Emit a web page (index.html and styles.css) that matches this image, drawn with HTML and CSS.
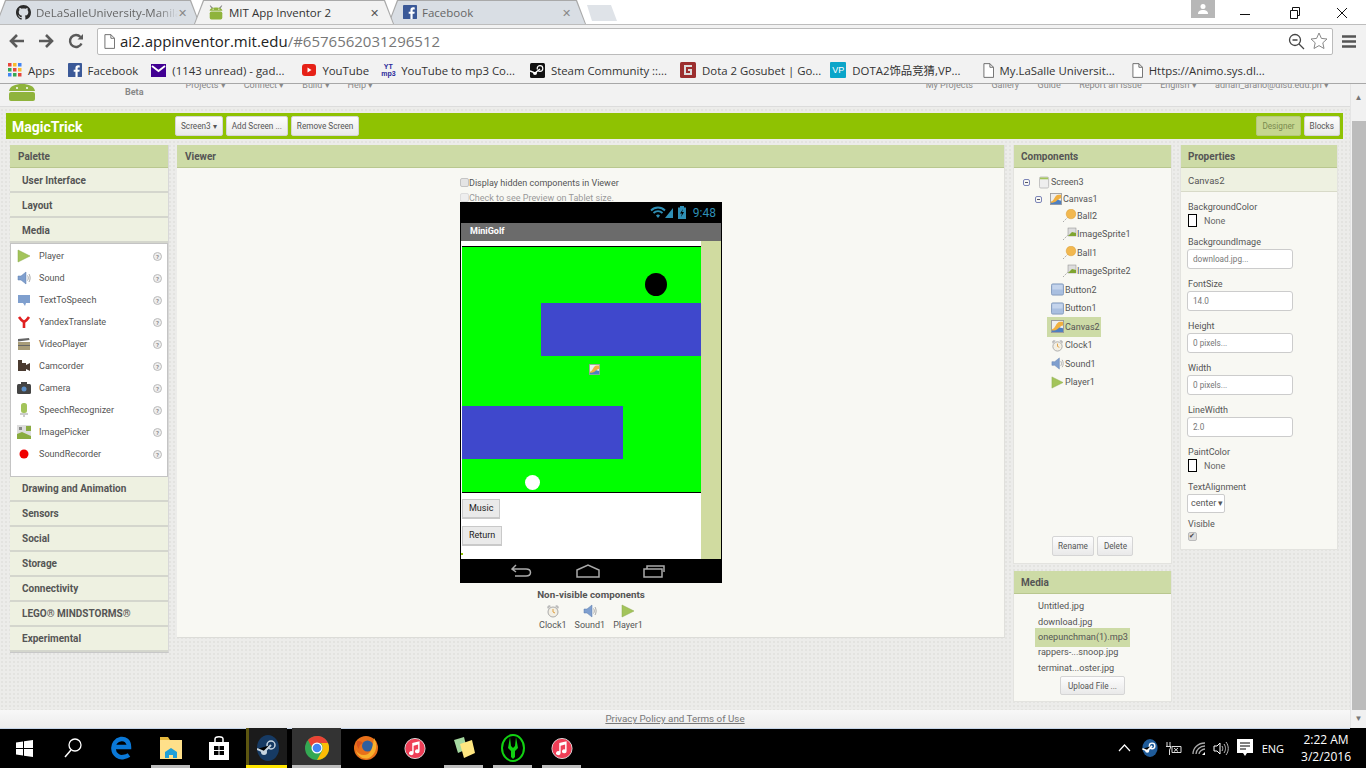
FILE: index.html
```html
<!DOCTYPE html>
<html lang="en">
<head>
  <meta charset="UTF-8">
  <meta name="viewport" content="width=device-width, initial-scale=1.0">
  <title>MIT App Inventor 2</title>
  <link rel="stylesheet" href="styles.css">
</head>
<body>
  <!-- shared icons -->
  <svg class="defs" width="0" height="0">
    <defs>
      <symbol id="i-github" viewBox="0 0 16 16"><path fill="#2b2b2b" d="M8 0C3.58 0 0 3.58 0 8c0 3.54 2.29 6.53 5.47 7.59.4.07.55-.17.55-.38 0-.19-.01-.82-.01-1.49-2.01.37-2.53-.49-2.69-.94-.09-.23-.48-.94-.82-1.13-.28-.15-.68-.52-.01-.53.63-.01 1.08.58 1.23.82.72 1.21 1.87.87 2.33.66.07-.52.28-.87.51-1.07-1.78-.2-3.64-.89-3.64-3.95 0-.87.31-1.59.82-2.15-.08-.2-.36-1.02.08-2.12 0 0 .67-.21 2.2.82.64-.18 1.32-.27 2-.27.68 0 1.36.09 2 .27 1.53-1.04 2.2-.82 2.2-.82.44 1.1.16 1.92.08 2.12.51.56.82 1.27.82 2.15 0 3.07-1.87 3.75-3.65 3.95.29.25.54.73.54 1.48 0 1.07-.01 1.93-.01 2.2 0 .21.15.46.55.38A8.013 8.013 0 0016 8c0-4.42-3.58-8-8-8z"/></symbol>
      <symbol id="i-fb" viewBox="0 0 16 16"><rect width="16" height="16" rx="1" fill="#3b5998"/><path fill="#fff" d="M11 16V10h2l.4-2.4H11V6.2c0-.8.3-1.2 1.2-1.2h1.2V2.8C13 2.7 12.300 2.600 11.500 2.600 9.700 2.600 8.500 3.700 8.500 5.800v1.800h-2V10h2v6z"/></symbol>
      <symbol id="i-droid" viewBox="0 0 28 28"><path fill="#8c8c8c" d="M4 2l5 5h10l5-5 1 1-4 6H7L3 3z"/><path fill="#8fb33c" d="M3 11C4 7 9 6 14 6s10 1 11 5v1H3z"/><rect x="3" y="13" width="22" height="14" rx="3" fill="#8fb33c"/><circle cx="9" cy="9" r="1" fill="#fff"/><circle cx="19" cy="9" r="1" fill="#fff"/></symbol>
      <symbol id="i-doc" viewBox="0 0 12 16"><path fill="#fff" stroke="#666" d="M1 .5h6.500l4 4v11H1zM7.500.5v4h4"/></symbol>
      <symbol id="i-player" viewBox="0 0 14 14"><path fill="#a3c45a" stroke="#8aa94a" stroke-width=".5" d="M1 1l12 6-12 6z"/></symbol>
      <symbol id="i-sound" viewBox="0 0 14 14"><path fill="#7f9fce" stroke="#5c7cae" stroke-width=".5" d="M1 5h3l5-4v12L4 9H1z"/><path fill="none" stroke="#aaa" d="M10.500 4.500c1 1.500 1 3.500 0 5M12 3c1.500 2.500 1.500 5.500 0 8"/></symbol>
      <symbol id="i-clock" viewBox="0 0 14 14"><circle cx="7" cy="8" r="5" fill="#f3efe3" stroke="#aaa"/><path fill="none" stroke="#e0a040" d="M7 5v3l2 1"/><path fill="#bbb" d="M1 3l2-2 2 1-3 3zM13 3l-2-2-2 1 3 3z"/></symbol>
      <symbol id="i-canvas" viewBox="0 0 14 14"><rect x=".5" y=".5" width="13" height="13" fill="#eee" stroke="#999"/><path fill="#f0b040" d="M1 10c4 0 4-8 9-8h3v4c-4 0-4 6-9 6H1z"/><path fill="#4f7fc0" d="M1 11c4 1 6-1 8-3l4 1v4H1z"/></symbol>
      <symbol id="i-button" viewBox="0 0 14 14"><rect x=".5" y="1" width="13" height="12" rx="1.500" fill="#a9bfe0" stroke="#8198bb"/><rect x="1.500" y="2" width="11" height="5" fill="#c4d4ec"/></symbol>
      <symbol id="i-ball" viewBox="0 0 14 14"><path fill="none" stroke="#aaa" stroke-dasharray="1.500 1" d="M0 13l5-5"/><circle cx="8" cy="5" r="4.800" fill="#f2b84f" stroke="#d99a30" stroke-width=".5"/></symbol>
      <symbol id="i-sprite" viewBox="0 0 14 14"><path fill="none" stroke="#aaa" stroke-dasharray="1.500 1" d="M0 13l5-5"/><rect x="5" y="1" width="8" height="8" fill="#ddd" stroke="#888" stroke-width=".5"/><path fill="#7fa52f" d="M5 9l4-4 4 1v3z"/></symbol>
      <symbol id="i-itunes" viewBox="0 0 24 24"><circle cx="12" cy="12" r="11" fill="#ef3e56" stroke="#ddd"/><path fill="#fff" d="M9 6l8-2v11a2.500 2.200 0 1 1-1.600-2V7.500L10.500 9v8a2.500 2.200 0 1 1-1.500-2z"/></symbol>
    </defs>
  </svg>

  <!-- browser chrome -->
  <div class="tabstrip">
    <div class="tab tab-first">
      <svg class="tab-ico" width="15" height="15"><use href="#i-github"/></svg>
      <span class="tab-title fade">DeLaSalleUniversity-Manila</span>
      <span class="tab-x">✕</span>
    </div>
    <div class="tab tab-active">
      <svg class="tab-ico" width="16" height="16"><use href="#i-droid"/></svg>
      <span class="tab-title">MIT App Inventor 2</span>
      <span class="tab-x">✕</span>
    </div>
    <div class="tab tab-last">
      <svg class="tab-ico" width="14" height="14"><use href="#i-fb"/></svg>
      <span class="tab-title">Facebook</span>
      <span class="tab-x">✕</span>
    </div>
    <div class="newtab"></div>
    <div class="win-btns">
      <div class="win-user">
        <svg width="12" height="12" viewBox="0 0 12 12"><circle cx="6" cy="3.500" r="2.500" fill="#fff"/><path fill="#fff" d="M1 11c0-3 2-4 5-4s5 1 5 4z"/></svg>
      </div>
      <svg class="win-min" width="12" height="12" viewBox="0 0 12 12"><path stroke="#111" d="M1 8.500h10"/></svg>
      <svg class="win-max" width="12" height="12" viewBox="0 0 12 12"><path fill="none" stroke="#111" d="M1.500 3.500h7v8h-7zM3.500 3.500v-3h7v8h-2"/></svg>
      <svg class="win-close" width="12" height="12" viewBox="0 0 12 12"><path stroke="#111" d="M1 1l10 10M11 1L1 11"/></svg>
    </div>
  </div>

  <div class="toolbar">
    <svg class="nav-ico" width="18" height="16" viewBox="0 0 18 16"><path fill="none" stroke="#5a5a5a" stroke-width="2.600" d="M16 8H3M9 2L3 8l6 6"/></svg>
    <svg class="nav-ico" width="18" height="16" viewBox="0 0 18 16"><path fill="none" stroke="#5a5a5a" stroke-width="2.600" d="M2 8h13M9 2l6 6-6 6"/></svg>
    <svg class="nav-ico" width="16" height="16" viewBox="0 0 16 16"><path fill="none" stroke="#5a5a5a" stroke-width="2.400" d="M13.500 10.500A6 6 0 1 1 12.500 4"/><path fill="#5a5a5a" d="M9.500 6.500H15V1z"/></svg>
    <div class="urlbar">
      <svg width="11" height="15"><use href="#i-doc"/></svg>
      <span class="url">ai2.appinventor.mit.edu<span class="url-rest">/#6576562031296512</span></span>
      <svg class="url-zoom" width="17" height="17" viewBox="0 0 17 17"><circle cx="7" cy="7" r="5.500" fill="none" stroke="#444" stroke-width="1.300"/><path stroke="#444" stroke-width="1.300" d="M4.500 7h5M11 11l5 5"/></svg>
      <svg class="url-star" width="18" height="18" viewBox="0 0 18 18"><path fill="none" stroke="#888" d="M9 1l2.400 5.400 5.600.6-4.200 3.800 1.200 5.700L9 13.600 4 16.500l1.200-5.700L1 7l5.600-.6z"/></svg>
    </div>
    <svg class="menu-ico" width="14" height="13" viewBox="0 0 14 13"><path stroke="#555" stroke-width="2.600" d="M0 1.500h14M0 6.500h14M0 11.500h14"/></svg>
  </div>

  <div class="bookmarks">
    <div class="bm bm-apps">
      <svg width="14" height="14" viewBox="0 0 14 14"><path fill="#e8453c" d="M0 0h3.500v3.500H0z"/><path fill="#f9bb2d" d="M5 0h3.500v3.500H5z"/><path fill="#4285f4" d="M10 0h3.500v3.500H10z"/><path fill="#34a853" d="M0 5h3.500v3.500H0z"/><path fill="#e8453c" d="M5 5h3.500v3.500H5z"/><path fill="#f9bb2d" d="M10 5h3.500v3.500H10z"/><path fill="#4285f4" d="M0 10h3.500v3.500H0z"/><path fill="#34a853" d="M5 10h3.500v3.500H5z"/><path fill="#e8453c" d="M10 10h3.500v3.500H10z"/></svg>
      <span>Apps</span>
    </div>
    <div class="bm"><svg width="14" height="14"><use href="#i-fb"/></svg><span>Facebook</span></div>
    <div class="bm bm-mail"><svg width="15" height="13" viewBox="0 0 15 13"><rect width="15" height="13" fill="#410093"/><path fill="none" stroke="#fff" stroke-width="1.800" d="M1 2l6.500 5L14 2"/></svg><span>(1143 unread) - gad...</span></div>
    <div class="bm bm-yt"><svg width="14" height="12" viewBox="0 0 14 12"><rect width="14" height="12" rx="3" fill="#e62117"/><path fill="#fff" d="M5.500 3.500l4 2.500-4 2.500z"/></svg><span>YouTube</span></div>
    <div class="bm bm-mp3"><span class="ytmp3">YT<br>mp3</span><span>YouTube to mp3 Co...</span></div>
    <div class="bm"><svg width="15" height="15" viewBox="0 0 15 15"><rect width="15" height="15" rx="1.500" fill="#111"/><circle cx="10" cy="5.500" r="2.800" fill="none" stroke="#fff" stroke-width="1.200"/><circle cx="5" cy="10" r="2" fill="#fff"/><path stroke="#fff" stroke-width="1.500" d="M0 8l5 2 5-4"/></svg><span>Steam Community ::...</span></div>
    <div class="bm bm-dota"><svg width="16" height="16" viewBox="0 0 16 16"><rect width="16" height="16" rx="1.500" fill="#9c2f2f"/><path fill="none" stroke="#ddd" stroke-width="2" d="M12 4H5v8h6V8H8"/></svg><span>Dota 2 Gosubet | Go...</span></div>
    <div class="bm"><span class="vp">VP</span><span>DOTA2饰品竞猜,VP...</span></div>
    <div class="bm bm-far"><svg width="11" height="15"><use href="#i-doc"/></svg><span>My.LaSalle Universit...</span></div>
    <div class="bm bm-doc"><svg width="11" height="15"><use href="#i-doc"/></svg><span>Https://Animo.sys.dl...</span></div>
  </div>

  <div class="viewport">
    <div class="page">
      <!-- top menu, scrolled up so only the bottom of it shows -->
      <header class="topmenu">
        <svg class="logo" width="28" height="17" viewBox="0 0 28 17"><path fill="#8fb33c" d="M1 7C2 2 7 0 14 0s12 2 13 7z"/><circle cx="9" cy="4" r="1" fill="#fff"/><circle cx="19" cy="4" r="1" fill="#fff"/><rect x="1" y="8" width="26" height="9" rx="2" fill="#8fb33c"/></svg>
        <span class="beta">Beta</span>
        <nav class="menu menu-left">
          <span>Projects ▾</span><span>Connect ▾</span><span>Build ▾</span><span>Help ▾</span>
        </nav>
        <nav class="menu menu-right">
          <span>My Projects</span><span>Gallery</span><span>Guide</span><span>Report an Issue</span><span>English ▾</span><span>adrian_afano@dlsu.edu.ph ▾</span>
        </nav>
      </header>

      <div class="projectbar">
        <strong class="project-name">MagicTrick</strong>
        <button class="btn">Screen3 ▾</button>
        <button class="btn">Add Screen ...</button>
        <button class="btn">Remove Screen</button>
        <div class="view-switch">
          <button class="btn btn-on">Designer</button>
          <button class="btn">Blocks</button>
        </div>
      </div>

      <main class="workspace">
        <!-- palette -->
        <section class="palette">
          <h4 class="box-head">Palette</h4>
          <div class="drawer">User Interface</div>
          <div class="drawer">Layout</div>
          <div class="drawer">Media</div>
          <ul class="palette-list">
            <li><svg width="14" height="14"><use href="#i-player"/></svg><span>Player</span><i>?</i></li>
            <li><svg width="14" height="14"><use href="#i-sound"/></svg><span>Sound</span><i>?</i></li>
            <li><svg width="14" height="14" viewBox="0 0 14 14"><path fill="#7f9fce" d="M1 2h12v8H9l-1 3-2-3H1z"/></svg><span>TextToSpeech</span><i>?</i></li>
            <li><svg width="14" height="14" viewBox="0 0 14 14"><path fill="none" stroke="#e02020" stroke-width="2.600" d="M2 2c2 3 3 4 5 5 2-1 3-2 5-5M7 7v6"/></svg><span>YandexTranslate</span><i>?</i></li>
            <li><svg width="14" height="14" viewBox="0 0 14 14"><rect x="1" y="5" width="12" height="8" fill="#a89c78"/><path fill="#666" d="M1 2l11-1 .5 2L1 4.500zM1 8h12v1H1z"/></svg><span>VideoPlayer</span><i>?</i></li>
            <li><svg width="14" height="14" viewBox="0 0 14 14"><path fill="#4a3a30" d="M1 4h8v8H1zM1 1h4v3H1zM9 6l4-2v8L9 10z"/></svg><span>Camcorder</span><i>?</i></li>
            <li><svg width="14" height="14" viewBox="0 0 14 14"><rect x="0" y="3" width="14" height="10" rx="1.500" fill="#444"/><path fill="#444" d="M4 1h6v2H4z"/><circle cx="7" cy="8" r="2.500" fill="#5b8fc9"/></svg><span>Camera</span><i>?</i></li>
            <li><svg width="14" height="14" viewBox="0 0 14 14"><rect x="4" y="0" width="6" height="10" rx="2.500" fill="#a3c45a"/><path fill="#ccc" d="M3 10h8v2H8v2H6v-2H3z"/></svg><span>SpeechRecognizer</span><i>?</i></li>
            <li><svg width="14" height="14" viewBox="0 0 14 14"><rect width="14" height="14" fill="#ddd"/><path fill="#8aac3f" d="M0 9l5-2 9 4v3H0zM9 1h5v5H9z"/><path fill="#888" d="M2 2h3v3H2z"/></svg><span>ImagePicker</span><i>?</i></li>
            <li><svg width="14" height="14" viewBox="0 0 14 14"><circle cx="7" cy="7" r="4.500" fill="#f00000"/></svg><span>SoundRecorder</span><i>?</i></li>
          </ul>
          <div class="drawer">Drawing and Animation</div>
          <div class="drawer">Sensors</div>
          <div class="drawer">Social</div>
          <div class="drawer">Storage</div>
          <div class="drawer">Connectivity</div>
          <div class="drawer">LEGO® MINDSTORMS®</div>
          <div class="drawer">Experimental</div>
        </section>

        <!-- viewer -->
        <section class="viewer">
          <h4 class="box-head">Viewer</h4>
          <div class="viewer-body">
            <div class="checks">
              <label class="check"><span class="checkbox"></span>Display hidden components in Viewer</label>
              <label class="check check-off"><span class="checkbox"></span>Check to see Preview on Tablet size.</label>
            </div>
            <div class="phone">
              <div class="statusbar">
                <svg width="24" height="13" viewBox="0 0 24 13"><path fill="none" stroke="#2f8fb5" stroke-width="1.800" d="M1 4.500C5 .5 11 .5 15 4.500M3.500 7C6 4.500 10 4.500 12.500 7"/><path fill="#2f8fb5" d="M6 9.500c1-1.200 3-1.200 4 0L8 12zM15 12l8-10v10z"/></svg>
                <svg width="8" height="13" viewBox="0 0 8 13"><path fill="#2f8fb5" d="M2 0h4v1.500h2V13H0V1.500h2z"/><path fill="#000" d="M5 3L2 7.500h2L3 11l3-5H4z"/></svg>
                <span class="clock">9:48</span>
              </div>
              <div class="titlebar">MiniGolf</div>
              <div class="screen">
                <div class="screen-main">
                  <div class="gamecanvas">
                    <div class="ball ball-black"></div>
                    <div class="wall wall-top"></div>
                    <svg class="sprite" width="11" height="11"><use href="#i-canvas"/></svg>
                    <div class="wall wall-bottom"></div>
                    <div class="ball ball-white"></div>
                  </div>
                  <button class="phone-btn">Music</button>
                  <button class="phone-btn phone-btn-2">Return</button>
                  <div class="phone-dot"></div>
                </div>
                <div class="screen-side"></div>
              </div>
              <div class="navbar">
                <svg width="22" height="14" viewBox="0 0 22 14"><path fill="none" stroke="#aaa" stroke-width="1.500" d="M5 1L1 5l4 3M1 5h14c6 0 6 7 0 7H4"/></svg>
                <svg width="24" height="14" viewBox="0 0 24 14"><path fill="none" stroke="#aaa" stroke-width="1.500" d="M1 6l11-5 11 5v7H1z"/></svg>
                <svg width="22" height="14" viewBox="0 0 22 14"><path fill="none" stroke="#aaa" stroke-width="1.500" d="M1 5h18v8H1zM4 5V2h17v6"/></svg>
              </div>
            </div>
            <div class="nonvisible-title">Non-visible components</div>
            <div class="nonvisible">
              <div><svg width="14" height="14"><use href="#i-clock"/></svg><span>Clock1</span></div>
              <div><svg width="14" height="14"><use href="#i-sound"/></svg><span>Sound1</span></div>
              <div><svg width="14" height="14"><use href="#i-player"/></svg><span>Player1</span></div>
            </div>
          </div>
        </section>

        <!-- components + media -->
        <div class="col-components">
          <section class="components">
            <h4 class="box-head">Components</h4>
            <div class="components-body">
              <ul class="tree">
                <li class="lvl-0"><span class="toggle"></span><svg width="11" height="13" viewBox="0 0 12 13"><rect x=".5" y=".5" width="10" height="12" rx="1.500" fill="#eee" stroke="#bbb"/><path fill="#a3c45a" d="M1 1h9v2H1z"/></svg><span>Screen3</span></li>
                <li class="lvl-1"><span class="toggle"></span><svg width="12" height="12"><use href="#i-canvas"/></svg><span>Canvas1</span></li>
                <li class="lvl-2 first-leaf"><svg width="14" height="14"><use href="#i-ball"/></svg><span>Ball2</span></li>
                <li class="lvl-2"><svg width="14" height="14"><use href="#i-sprite"/></svg><span>ImageSprite1</span></li>
                <li class="lvl-2"><svg width="14" height="14"><use href="#i-ball"/></svg><span>Ball1</span></li>
                <li class="lvl-2"><svg width="14" height="14"><use href="#i-sprite"/></svg><span>ImageSprite2</span></li>
                <li class="lvl-3"><svg width="13" height="13"><use href="#i-button"/></svg><span>Button2</span></li>
                <li class="lvl-3"><svg width="13" height="13"><use href="#i-button"/></svg><span>Button1</span></li>
                <li class="lvl-3 selected"><svg width="13" height="13"><use href="#i-canvas"/></svg><span>Canvas2</span></li>
                <li class="lvl-3"><svg width="13" height="13"><use href="#i-clock"/></svg><span>Clock1</span></li>
                <li class="lvl-3"><svg width="13" height="13"><use href="#i-sound"/></svg><span>Sound1</span></li>
                <li class="lvl-3"><svg width="13" height="13"><use href="#i-player"/></svg><span>Player1</span></li>
              </ul>
              <div class="comp-actions">
                <button class="btn">Rename</button>
                <button class="btn">Delete</button>
              </div>
            </div>
          </section>

          <section class="media">
            <h4 class="box-head">Media</h4>
            <ul class="media-list">
              <li>Untitled.jpg</li>
              <li>download.jpg</li>
              <li class="selected">onepunchman(1).mp3</li>
              <li>rappers-...snoop.jpg</li>
              <li>terminat...oster.jpg</li>
            </ul>
            <button class="btn btn-upload">Upload File ...</button>
          </section>
        </div>

        <!-- properties -->
        <section class="properties">
          <h4 class="box-head">Properties</h4>
          <div class="prop-subject">Canvas2</div>
          <div class="prop-list">
            <div class="prop"><label>BackgroundColor</label><div class="swatch-row"><span class="swatch"></span>None</div></div>
            <div class="prop"><label>BackgroundImage</label><div class="input">download.jpg...</div></div>
            <div class="prop"><label>FontSize</label><div class="input">14.0</div></div>
            <div class="prop"><label>Height</label><div class="input">0 pixels...</div></div>
            <div class="prop"><label>Width</label><div class="input">0 pixels...</div></div>
            <div class="prop"><label>LineWidth</label><div class="input">2.0</div></div>
            <div class="prop"><label>PaintColor</label><div class="swatch-row"><span class="swatch"></span>None</div></div>
            <div class="prop prop-select"><label>TextAlignment</label><div class="select">center ▾</div></div>
            <div class="prop prop-visible"><label>Visible</label><span class="tick">✔</span></div>
          </div>
        </section>
      </main>

      <footer class="footer"><a href="#">Privacy Policy and Terms of Use</a></footer>
    </div>
    <div class="scrollbar">
      <div class="sb-arrow">▲</div>
      <div class="sb-thumb"></div>
      <div class="sb-arrow">▼</div>
    </div>
  </div>

  <!-- windows taskbar -->
  <div class="taskbar">
    <div class="task task-start"><svg width="17" height="17" viewBox="0 0 17 17"><path fill="#fff" d="M0 2.500l7-1v6.500H0zM8 1.300L17 0v8H8zM0 9h7v6.500l-7-1zM8 9h9v8l-9-1.300z"/></svg></div>
    <div class="task"><svg width="18" height="20" viewBox="0 0 18 20"><circle cx="11" cy="7" r="6" fill="none" stroke="#fff" stroke-width="1.300"/><path stroke="#fff" stroke-width="1.500" d="M7 12l-6 7"/></svg></div>
    <div class="task"><svg width="22" height="24" viewBox="0 0 22 24"><path fill="none" stroke="#0a78d7" stroke-width="4.500" d="M3 11h15C18 5 14 2.500 10 3 5 4 2 8 2.500 13c.5 6 6 9 10 8 2-.3 4-1 5.500-2"/></svg></div>
    <div class="task is-open"><svg width="22" height="22" viewBox="0 0 22 22"><path fill="#e6b93e" d="M0 0h8l2 3h-10z"/><path fill="#ffe08a" d="M0 3h22v19H0z"/><path fill="#1f9fd8" d="M5 21v-6l6-4 6 4v6h-4v-3H9v3z"/></svg></div>
    <div class="task task-store"><svg width="20" height="24" viewBox="0 0 20 24"><path fill="#fff" d="M0 6h20v18H0z"/><path fill="none" stroke="#fff" stroke-width="1.500" d="M6 6V3c0-3 8-3 8 0v3"/><path fill="#000" d="M5 10h4.500v4H5zM10.500 10H15v4h-4.500zM5 15h4.500v4H5zM10.500 15H15v4h-4.500z"/></svg></div>
    <div class="task task-steam"><svg width="22" height="26" viewBox="0 0 22 26"><ellipse cx="11" cy="13" rx="11" ry="13" fill="#163a63"/><circle cx="14" cy="10" r="4" fill="none" stroke="#c7d5e0" stroke-width="1.500"/><circle cx="7" cy="17" r="3" fill="#c7d5e0"/><path stroke="#c7d5e0" stroke-width="2" d="M0 14l7 3 7-7"/></svg></div>
    <div class="task task-chrome is-open"><svg width="24" height="28" viewBox="0 0 24 24"><circle cx="12" cy="12" r="12" fill="#34a853"/><path fill="#ea4335" d="M3 4a12 12 0 0 1 20 3H12c-3 0-5 2-5.500 4z"/><path fill="#fbbc05" d="M23 7a12 12 0 0 1-11 17l5-9c1-2 1-5-1-8z"/><circle cx="12" cy="12" r="5.500" fill="#fff"/><circle cx="12" cy="12" r="4.300" fill="#4285f4"/></svg></div>
    <div class="task"><svg width="24" height="28" viewBox="0 0 24 24"><circle cx="12" cy="12" r="12" fill="#e8701a"/><circle cx="13.500" cy="10" r="5.500" fill="#2f5f9e"/><path fill="#f8b02c" d="M20 2c4 6 3 16-5 20-6 2-12-2-13-8 2 5 8 6 12 4 4-3 5-9 6-16z"/><path fill="#d9531e" d="M3 5c2 0 4 0 6 2-3 1-4 3-4 6-2-2-3-5-2-8z"/></svg></div>
    <div class="task"><svg width="22" height="25" viewBox="0 0 24 24"><use href="#i-itunes"/></svg></div>
    <div class="task is-open"><svg width="24" height="24" viewBox="0 0 24 24"><path fill="#a5d8a0" d="M2 4l10-3 3 12-9 4z"/><path fill="#ffe680" d="M8 8l12-4 3 13-11 5z"/></svg></div>
    <div class="task is-open"><svg width="24" height="28" viewBox="0 0 24 28"><ellipse cx="12" cy="14" rx="11" ry="13" fill="none" stroke="#12d112" stroke-width="2"/><path fill="#12d112" d="M9 3l1 9 2 2 2-2 1-9 2 11-3 3v6l-2 2-2-2v-6l-3-3z"/></svg></div>
    <div class="task is-open"><svg width="22" height="25" viewBox="0 0 24 24"><use href="#i-itunes"/></svg></div>

    <div class="tray">
      <svg width="13" height="8" viewBox="0 0 13 8"><path fill="none" stroke="#fff" stroke-width="1.200" d="M1 7l5.500-6L12 7"/></svg>
      <svg class="tray-steam" width="16" height="18" viewBox="0 0 22 26"><ellipse cx="11" cy="13" rx="11" ry="13" fill="#1f5b99"/><circle cx="14" cy="10" r="4" fill="none" stroke="#fff" stroke-width="2"/><circle cx="7" cy="17" r="3" fill="#fff"/><path stroke="#fff" stroke-width="2.500" d="M0 14l7 3 7-7"/></svg>
      <svg class="tray-power" width="16" height="13" viewBox="0 0 16 13"><path fill="none" stroke="#ddd" d="M1 0v4M4 0v4M0 4.500h5L3.500 8v5M6 4.500h9v6H6z"/><path stroke="#ddd" d="M8 6l4 3.500M12 6L8 9.500"/></svg>
      <svg class="tray-wifi" width="16" height="15" viewBox="0 0 16 15"><path fill="none" stroke="#aaa" stroke-width="1.300" d="M1 13C1 7 6 2 13 2M4 13c0-4 4-8 9-8M7 13c0-2 3-5 6-5"/><path fill="#fff" d="M10 14l3-3v3z"/></svg>
      <svg class="tray-vol" width="16" height="15" viewBox="0 0 16 15"><path fill="none" stroke="#fff" d="M1 5h3l3-3v11l-3-3H1z"/><path fill="none" stroke="#bbb" d="M9 5c1 1.500 1 3.500 0 5M11 3c2 3 2 6 0 9M13 1c3 4 3 9 0 13"/></svg>
      <svg class="tray-note" width="16" height="18" viewBox="0 0 16 18"><path fill="#fff" d="M0 0h16v14H10l-2 3-2-3H0z"/><path stroke="#000" d="M3 4h10M3 7h10M3 10h6"/></svg>
      <span class="tray-lang">ENG</span>
      <div class="tray-clock"><span>2:22 AM</span><span>3/2/2016</span></div>
    </div>
  </div>
</body>
</html>
```

FILE: styles.css
```css
/* page base */
* {
  box-sizing: border-box;
}
html, body {
  margin: 0;
  height: 768px;
  overflow: hidden;
}
body {
  font-family: Roboto, "Liberation Sans", sans-serif;
  color: #555;
  background: #fff;
}
ul {
  list-style: none;
  margin: 0;
  padding: 0;
}
svg {
  flex: none;
  display: block;
}
.defs {
  position: absolute;
}

/* tab strip */
.tabstrip {
  height: 24px;
  display: flex;
  align-items: flex-end;
  background: #fff;
  font-family: "Open Sans", "Liberation Sans", sans-serif;
  font-size: 11.5px;
}
.tab {
  --fill: #d9dee4;
  height: 24px;
  width: 200px;
  display: flex;
  align-items: center;
  position: relative;
  clip-path: polygon(0 100%, 9px 0, calc(100% - 9px) 0, 100% 100%);
  background: #a9a9a9;
  color: #666;
}
.tab::before {
  content: "";
  position: absolute;
  inset: 1px 1px 0;
  z-index: -1;
  clip-path: polygon(0 100%, 9px 0, calc(100% - 9px) 0, 100% 100%);
  background: var(--fill);
}
.tab-first {
  width: 204px;
  margin-left: -4px;
  padding-left: 20px;
}
.tab-active {
  --fill: #f2f2f2;
  width: 200px;
  margin-left: -6px;
  padding-left: 14px;
  color: #333;
  z-index: 2;
}
.tab-last {
  width: 198px;
  margin-left: -6px;
  padding-left: 15px;
}
.tab-ico {
  margin-right: 5px;
}
.tab-title {
  flex: 1;
  min-width: 0;
  white-space: nowrap;
  overflow: hidden;
}
.fade {
  -webkit-mask-image: linear-gradient(90deg, #000 85%, transparent);
  mask-image: linear-gradient(90deg, #000 85%, transparent);
}
.tab-x {
  width: 24px;
  font-size: 11px;
  color: #888;
}
.tab-active .tab-x {
  color: #555;
}
.tab-first .tab-x {
  width: 22px;
}
.newtab {
  width: 30px;
  height: 16px;
  margin: 0 0 3px 1px;
  background: #dfe3e8;
  clip-path: polygon(0 0, 24px 0, 100% 100%, 5px 100%);
}
.win-btns {
  margin-left: auto;
  align-self: flex-start;
  display: flex;
  align-items: flex-start;
}
.win-user {
  width: 24px;
  height: 18px;
  background: #b7b7b7;
  display: flex;
  align-items: center;
  justify-content: center;
}
.win-min {
  margin: 6px 0 0 24px;
}
.win-max {
  margin: 7px 0 0 38px;
}
.win-close {
  margin: 7px 18px 0 35px;
}

/* address bar */
.toolbar {
  height: 33px;
  background: #f2f2f2;
  border-top: 1px solid #bdbdbd;
  display: flex;
  align-items: center;
  padding: 0 10px 0 8px;
}
.nav-ico {
  margin-right: 11px;
}
.toolbar .nav-ico:nth-child(3) {
  margin: 0 13px 0 2px;
}
.urlbar {
  flex: 1;
  height: 27px;
  background: #fff;
  border: 1px solid #bbb;
  border-radius: 2px;
  display: flex;
  align-items: center;
  padding: 0 4px 0 6px;
}
.url {
  margin-left: 5px;
  font-family: "Open Sans", "Liberation Sans", sans-serif;
  font-size: 15px;
  color: #222;
}
.url-rest {
  color: #777;
}
.url-zoom {
  margin-left: auto;
}
.url-star {
  margin-left: 5px;
}
.menu-ico {
  margin-left: 9px;
}

/* bookmarks bar */
.bookmarks {
  height: 27px;
  background: #f2f2f2;
  border-bottom: 1px solid #a8a8a8;
  display: flex;
  align-items: center;
  padding-left: 8px;
  font-family: "Open Sans", "Noto Sans CJK SC", sans-serif;
  font-size: 11.4px;
  color: #333;
  white-space: nowrap;
}
.bm {
  display: flex;
  align-items: center;
  gap: 6px;
  margin-right: 13px;
}
.bm-mail {
  margin-right: 18px;
}
.bm-yt {
  margin-right: 12px;
}
.bm-mp3 {
  margin-right: 15px;
}
.bm-dota {
  margin-right: 9px;
}
.bm-far {
  margin-left: 9px;
  margin-right: 17px;
}
.ytmp3 {
  width: 14px;
  font: bold 7px/7px "Liberation Sans", sans-serif;
  color: #2a2a9a;
  text-align: center;
}
.vp {
  width: 16px;
  height: 16px;
  background: #0aa5c9;
  color: #fff;
  font: 9px/16px "Liberation Sans", sans-serif;
  text-align: center;
  border-radius: 1px;
}

/* page area */
.viewport {
  height: 644px;
  display: flex;
}
.page {
  flex: 1;
  min-width: 0;
  display: flex;
  flex-direction: column;
  background-color: #ececea;
  background-image: radial-gradient(#e3e3e0 1px, transparent 1px);
  background-size: 4px 4px;
}
.scrollbar {
  width: 16px;
  background: #f1f1f1;
  border-left: 1px solid #e4e4e4;
  display: flex;
  flex-direction: column;
  align-items: center;
  font-size: 8px;
  color: #777;
}
.sb-arrow {
  height: 37px;
  line-height: 16px;
  padding-top: 6px;
}
.sb-thumb {
  flex: 1;
  width: 14px;
  background: #bcbcbc;
}
.sb-arrow:last-child {
  height: 18px;
  padding-top: 1px;
}

/* clipped top menu */
.topmenu {
  height: 23px;
  flex: none;
  background: #f2f2f2;
  border-bottom: 1px solid #dcdcdc;
  display: flex;
  align-items: flex-start;
  overflow: hidden;
  font-size: 9px;
  color: #888;
}
.logo {
  margin-left: 8px;
}
.beta {
  margin: 3px 0 0 89px;
  font-weight: bold;
  font-size: 9px;
}
.menu {
  display: flex;
  margin-top: -4px;
  white-space: nowrap;
}
.menu-left {
  margin-left: 42px;
  gap: 18px;
}
.menu-right {
  margin-left: auto;
  margin-right: 21px;
  gap: 18.500px;
}

/* green project bar */
.projectbar {
  flex: none;
  height: 26px;
  margin: 6px 7px 0 6px;
  background: #8fc202;
  display: flex;
  align-items: center;
  gap: 3px;
  padding: 0 3px 0 6px;
}
.project-name {
  width: 160px;
  padding-top: 1px;
  color: #fff;
  font-size: 14px;
}
.btn {
  height: 20px;
  padding: 0 5px;
  font: 8.2px Roboto, sans-serif;
  color: #555;
  background: linear-gradient(#fdfdfd, #e9e9e9);
  border: 1px solid #d5d5d5;
  border-radius: 2px;
  white-space: nowrap;
}
.view-switch {
  margin-left: auto;
  display: flex;
  gap: 3px;
}
.btn-on {
  background: #c5d68f;
  border-color: #b5c77e;
  color: #7a8a50;
}

/* main columns */
.workspace {
  flex: none;
  height: 565px;
  display: flex;
  align-items: flex-start;
  padding: 6px 0 0 10px;
}
.box-head {
  margin: 0;
  height: 23px;
  padding-left: 8px;
  line-height: 24px;
  background: #cddba6;
  border-bottom: 1px solid #b9c78f;
  font-size: 10px;
  font-weight: bold;
  color: #555;
}
.col-components .box-head, .properties .box-head {
  padding-left: 7px;
}
.palette {
  width: 159px;
  margin-right: 8px;
  border-right: 1px solid #d8d8d8;
  border-bottom: 1px solid #c8c8c8;
}
.drawer {
  height: 25px;
  padding-left: 12px;
  line-height: 25px;
  background: #eef1e1;
  border-bottom: 2px solid #d4d6cd;
  font-size: 10px;
  font-weight: bold;
  color: #555;
}
.palette-list ~ .drawer {
  line-height: 23px;
}
.palette-list {
  height: 234px;
  padding-top: 1px;
  background: #fff;
  border: 1px solid #c4c4c4;
  margin: 0;
}
.palette-list li {
  height: 22px;
  display: flex;
  align-items: center;
  padding-left: 6px;
  font-size: 9.1px;
}
.palette-list span {
  flex: 1;
  margin-left: 8px;
}
.palette-list i {
  width: 9px;
  height: 9px;
  margin-right: 5px;
  border: 1px solid #bbb;
  border-radius: 50%;
  background: #eee;
  font: bold 6px/7px Roboto, sans-serif;
  color: #888;
  text-align: center;
}

/* viewer */
.viewer {
  width: 828px;
  margin-right: 8px;
  background: #f8f8f3;
  border-right: 1px solid #e0e0dc;
  border-bottom: 1px solid #dcdcd8;
}
.viewer-body {
  height: 469px;
  padding: 7px 0 0 283px;
}
.checks {
  height: 27px;
  font-size: 9px;
}
.check {
  height: 15px;
  display: flex;
  align-items: center;
  white-space: nowrap;
}
.check-off {
  color: #999;
}
.checkbox {
  width: 9px;
  height: 9px;
  background: #e4e4e4;
  border: 1px solid #c4c4c4;
  border-radius: 2px;
}
.check-off .checkbox {
  background: #eee;
  border-color: #ddd;
}
.phone {
  width: 262px;
  height: 381px;
  background: #000;
  padding: 0 1px;
  display: flex;
  flex-direction: column;
}
.statusbar {
  height: 21px;
  flex: none;
  display: flex;
  align-items: center;
  justify-content: flex-end;
  gap: 4px;
  padding-right: 5px;
  color: #2f8fb5;
  font-size: 12px;
}
.clock {
  margin-left: 3px;
}
.titlebar {
  height: 18px;
  flex: none;
  background: #6b6b6b;
  padding-left: 9px;
  line-height: 17px;
  color: #fff;
  font-size: 9px;
  font-weight: bold;
}
.screen {
  height: 318px;
  flex: none;
  display: flex;
}
.screen-main {
  flex: 1;
  background: #fff;
  padding-top: 5px;
  position: relative;
}
.screen-side {
  width: 20px;
  background: #d0dba0;
}
.gamecanvas {
  height: 247px;
  background: #00ff00;
  border: solid #000;
  border-width: 1px 0;
  margin-left: 1px;
  position: relative;
}
.wall {
  position: absolute;
  height: 53px;
  background: #3f48cc;
}
.wall-top {
  left: 79px;
  right: 0;
  top: 56px;
}
.wall-bottom {
  left: 0;
  width: 161px;
  top: 159px;
}
.ball {
  position: absolute;
  border-radius: 50%;
}
.ball-black {
  left: 183px;
  top: 26px;
  width: 22px;
  height: 23px;
  background: #000;
}
.ball-white {
  left: 63px;
  top: 228px;
  width: 15px;
  height: 15px;
  background: #fff;
}
.sprite {
  position: absolute;
  left: 127px;
  top: 117px;
}
.phone-btn {
  display: block;
  height: 20px;
  margin: 6px 0 0 1px;
  padding: 0 6px 2px;
  background: #eaeaea;
  border: 1px solid #c9c9c9;
  border-width: 1px 1px 2px 1px;
  font: 9px Roboto, sans-serif;
  color: #222;
}
.phone-btn-2 {
  margin-top: 7px;
}
.phone-dot {
  position: absolute;
  left: 0;
  top: 312px;
  width: 2px;
  height: 2px;
  background: #8fc202;
}
.navbar {
  flex: 1;
  display: flex;
  align-items: center;
  justify-content: center;
  gap: 43px;
  padding-right: 7px;
}
.nonvisible-title {
  width: 262px;
  margin-top: 5px;
  text-align: center;
  font-size: 9.8px;
  font-weight: bold;
  line-height: 13px;
}
.nonvisible {
  width: 262px;
  display: flex;
  justify-content: center;
  gap: 8px;
  margin-top: 3px;
  font-size: 9px;
}
.nonvisible div {
  display: flex;
  flex-direction: column;
  align-items: center;
  gap: 2px;
}

/* components panel */
.col-components {
  width: 159px;
  margin-right: 8px;
}
.components, .media, .properties {
  background: #f8f8f3;
  border: solid #e3e3df;
  border-width: 0 1px 1px;
}
.components-body {
  height: 395px;
  display: flex;
  flex-direction: column;
  padding-top: 5px;
}
.tree {
  flex: 1;
  font-size: 9px;
}
.tree li {
  height: 18.500px;
  display: flex;
  align-items: center;
  width: fit-content;
  gap: 1px;
}
.toggle {
  width: 7px;
  height: 7px;
  border: 1px solid #7c85b8;
  border-radius: 2px;
  position: relative;
  margin-right: 8px;
}
.toggle::after {
  content: "";
  position: absolute;
  left: 1px;
  top: 2px;
  width: 3px;
  height: 1px;
  background: #556;
}
.tree .lvl-0 { height: 18px; padding-left: 9px; }
.tree .lvl-1 { height: 16px; padding-left: 21px; }
.lvl-1 .toggle { margin-right: 7px; }
.tree .lvl-2 { padding-left: 49px; gap: 0; }
.tree .first-leaf { height: 18px; }
.lvl-3 { padding-left: 37px; }
.tree .lvl-3.selected {
  height: 20.500px;
  margin: -1px 0 -1px 33px;
  padding: 0 1px 0 4px;
  background: #cddba6;
}
.comp-actions {
  display: flex;
  justify-content: center;
  gap: 3px;
  margin-bottom: 7px;
}
.comp-actions .btn {
  padding: 0 5.500px;
}

/* media panel */
.media {
  margin-top: 7px;
  height: 131px;
}
.media-list {
  padding: 5px 0 0 22px;
  font-size: 9.1px;
}
.media-list li {
  height: 15.500px;
  line-height: 15.500px;
  padding-left: 2px;
  width: fit-content;
}
.media-list .selected {
  background: #cddba6;
  height: 19px;
  line-height: 19px;
  margin: -2px 0 -2px -1px;
  padding: 0 2px 0 3px;
}
.btn-upload {
  display: block;
  margin: 0 auto;
  height: 19px;
  padding: 0 6.500px;
}

/* properties panel */
.properties {
  width: 158px;
  height: 405px;
}
.prop-subject {
  height: 24px;
  padding-left: 7px;
  line-height: 26px;
  background: #eef1e1;
  border-bottom: 1px solid #d8dac8;
  font-size: 9.5px;
}
.prop-list {
  padding: 9px 0 0 7px;
  font-size: 9px;
}
.prop {
  height: 42px;
}
.prop label {
  display: block;
  height: 12px;
  line-height: 12px;
}
.prop:first-child {
  height: 35px;
}
.swatch-row {
  display: flex;
  align-items: center;
  gap: 7px;
  margin-top: 1px;
  color: #666;
}
.swatch {
  width: 9px;
  height: 13px;
  background: #fff;
  border: 1px solid #000;
}
.input {
  width: 106px;
  height: 20px;
  margin: 1px 0 0 -1px;
  padding-left: 5px;
  line-height: 18px;
  background: #fff;
  border: 1px solid #ccc;
  border-radius: 3px;
  font-size: 8.2px;
  color: #777;
}
.prop:nth-child(7) {
  height: 35px;
}
.prop-select {
  height: 37px;
}
.select {
  width: 38px;
  height: 19px;
  margin: 1px 0 0 -1px;
  padding-left: 3px;
  line-height: 17px;
  background: #fff;
  border: 1px solid #ccc;
  border-radius: 2px;
  white-space: nowrap;
  overflow: hidden;
}
.tick {
  display: block;
  width: 9px;
  height: 9px;
  margin-top: 2px;
  background: #ddd;
  border: 1px solid #bbb;
  border-radius: 2px;
  font-size: 7px;
  line-height: 7px;
  color: #444;
}

/* footer link */
.footer {
  flex: 1;
  margin-top: 6px;
  background: linear-gradient(#f8f8f8, #ececec);
  border-bottom: 1px solid #c5d4e8;
  text-align: center;
  font-size: 9.8px;
  line-height: 18px;
}
.footer a {
  color: #777;
}

/* taskbar */
.taskbar {
  height: 40px;
  background: #000;
  display: flex;
  color: #fff;
}
.task {
  width: 49px;
  height: 40px;
  display: flex;
  align-items: center;
  justify-content: center;
  position: relative;
}
.task-start {
  width: 48px;
}
.task-store {
  width: 48px;
  margin-right: 3px;
}
.task-steam {
  width: 41px;
  background: #1b1b1b;
  border-left: 3px solid #5d5610;
  margin-right: 5px;
}
.task-steam::after {
  content: "";
  position: absolute;
  left: -3px;
  right: 0;
  bottom: 0;
  height: 3px;
  background: #ffe500;
}
.task-chrome {
  background: #333;
}
.is-open::after {
  content: "";
  position: absolute;
  left: 5px;
  right: 5px;
  bottom: 0;
  height: 3px;
  background: #bdbdbd;
}
.task-chrome.is-open::after {
  left: 0;
  right: 0;
}
.tray {
  margin-left: auto;
  display: flex;
  align-items: center;
  padding-right: 15px;
  font-family: "Open Sans", "Liberation Sans", sans-serif;
  font-size: 12px;
}
.tray-steam { margin-left: 11px; }
.tray-power { margin-left: 8px; }
.tray-wifi { margin-left: 10px; }
.tray-vol { margin-left: 5px; }
.tray-note { margin-left: 8px; }
.tray-lang { margin-left: 9px; font-size: 11px; }
.tray-clock {
  margin-left: 17px;
  display: flex;
  flex-direction: column;
  align-items: center;
  gap: 3px;
  line-height: 14px;
}
```
